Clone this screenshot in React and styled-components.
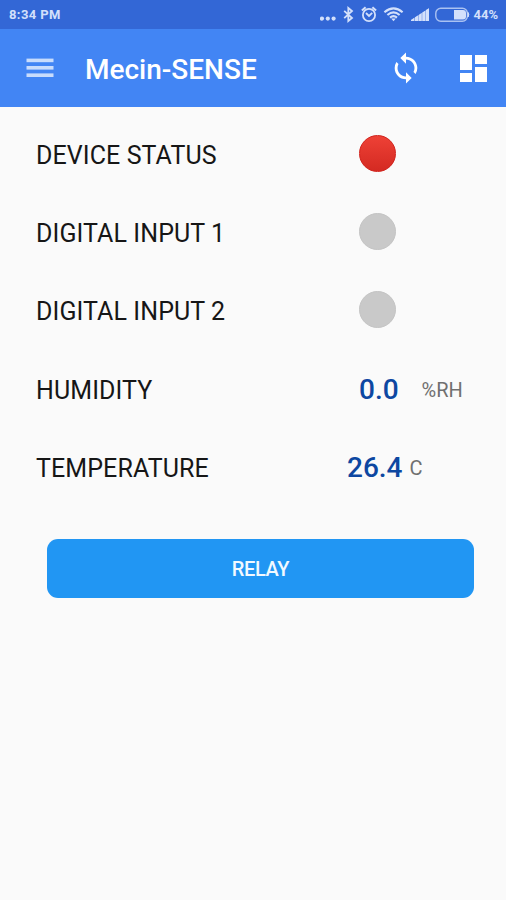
import React from "react";
import styled, { createGlobalStyle } from "styled-components";

const GlobalStyle = createGlobalStyle`
  * { box-sizing: border-box; }
  html, body { margin: 0; background: #fafafa; }
  body { font-family: Roboto, sans-serif; }
`;

const Screen = styled.div`
  display: flex;
  flex-direction: column;
  width: 506px;
  height: 900px;
  overflow: hidden;
  background: #fafafa;
`;

const StatusBar = styled.div`
  display: flex;
  align-items: center;
  justify-content: space-between;
  height: 29px;
  padding: 0 8px 0 9px;
  background: #3367d6;
  color: #d3e0fb;
`;

const StatusText = styled.span`
  font-size: 13px;
  font-weight: 700;
  line-height: 29px;
  white-space: nowrap;
  letter-spacing: ${(p) => p.$spacing || 0}px;
`;

const StatusIcons = styled.div`
  display: flex;
  align-items: center;

  svg { display: block; flex: none; }
`;

const AppBar = styled.header`
  display: flex;
  align-items: center;
  height: 78px;
  padding: 0 19px 0 26px;
  background: #4285f4;
  color: #fff;
`;

const IconButton = styled.button`
  display: flex;
  padding: 0;
  border: 0;
  background: none;
  color: inherit;
  margin-left: ${(p) => p.$gap || 0}px;
`;

const Title = styled.h1`
  flex: 1;
  margin: 4px 0 0 31px;
  font-size: 28px;
  font-weight: 500;
  line-height: 34px;
`;

const Readings = styled.main`
  display: grid;
  grid-auto-rows: 78.3px;
  padding: 9px 0 0 36px;
`;

const Row = styled.div`
  display: grid;
  grid-template-columns: ${(p) => p.$split}px 1fr;
  align-items: center;
`;

const Label = styled.span`
  font-size: 25px;
  line-height: 30px;
  padding-top: 1px;
  color: #161616;
  white-space: nowrap;
  letter-spacing: 0.09px;
`;

const Lamp = styled.span`
  width: 37px;
  height: 37px;
  margin-top: -4px;
  border-radius: 50%;
  background: ${(p) => (p.$on ? "linear-gradient(#ee4136, #d42a22)" : "#c9c9c9")};
  border: 1px solid ${(p) => (p.$on ? "#d1211b" : "#c4c4c4")};
`;

const Reading = styled.div`
  display: flex;
  align-items: center;
`;

const Value = styled.span`
  font-size: 28px;
  font-weight: 500;
  line-height: 34px;
  color: #0d47a1;
`;

const Unit = styled.span`
  margin-left: ${(p) => p.$gap}px;
  font-size: 20px;
  line-height: 30px;
  color: #707070;
`;

const RelayButton = styled.button`
  width: 427px;
  height: 58.5px;
  margin: 32px 0 0 47px;
  padding: 0;
  border: 0;
  border-radius: 11px;
  background: #2196f3;
  color: #f2f9ff;
  font-family: inherit;
  font-size: 20px;
  font-weight: 500;
  letter-spacing: -0.35px;
`;

const Dots = () => (
  <svg width="16" height="29" fill="currentColor">
    <circle cx="2" cy="18.6" r="2.1" />
    <circle cx="7.8" cy="18.6" r="2.1" />
    <circle cx="13.6" cy="18.6" r="2.1" />
  </svg>
);

const Bluetooth = () => (
  <svg width="23" height="29" fill="none" stroke="currentColor" strokeWidth="1.8">
    <path d="M8.2 10.8 L16 18 L12.3 21 V8 L16 11 L8.2 18.2" />
  </svg>
);

const Alarm = () => (
  <svg width="24" height="29" fill="none" stroke="currentColor" strokeWidth="1.8">
    <circle cx="10" cy="15" r="6.1" />
    <path d="M7 13 L10 15.9 L13.2 12.8" />
    <path d="M2.9 10.6 L6.6 7.3 M13.4 7.3 L17.1 10.6" strokeWidth="2" />
  </svg>
);

const Wifi = () => (
  <svg width="27" height="29" fill="none" stroke="currentColor" strokeWidth="2.1">
    <path d="M1.4 12.2 Q10.5 4.4 19.6 12.2" />
    <path d="M4.4 15 Q10.5 9.8 16.6 15" />
    <path d="M7 17.6 Q10.5 14.8 14 17.6" />
    <path d="M8.2 18.4 H12.8 L10.5 21.2 Z" fill="currentColor" stroke="none" />
  </svg>
);

const Signal = () => (
  <svg width="25" height="29" fill="currentColor">
    <path d="M1 21 V20 L19 8.2 V21 Z" opacity="0.55" />
    <path d="M1 21 V20 L4 18 V21 Z M5 21 V17.3 L8 15.4 V21 Z M8.8 21 V14.9 L11.6 13 V21 Z M12.4 21 V12.5 L15.2 10.7 V21 Z M16 21 V10.1 L19 8.2 V21 Z" />
  </svg>
);

const Battery = () => (
  <svg width="38" height="29">
    <rect x="0.8" y="8.2" width="31.6" height="13" rx="5" fill="none" stroke="currentColor" strokeWidth="1.4" opacity="0.75" />
    <path d="M19 10 H28 Q31 10 31 13 V16.4 Q31 19.4 28 19.4 H19 Z" fill="currentColor" />
    <path d="M33 12.4 Q34.6 14.7 33 17 Z" fill="currentColor" stroke="currentColor" />
  </svg>
);

const MenuIcon = () => (
  <svg width="28" height="20" fill="#c8dcfc">
    <rect x="0.5" y="0.6" width="27" height="3.6" />
    <rect x="0.5" y="8" width="27" height="3.6" />
    <rect x="0.5" y="15.4" width="27" height="3.6" />
  </svg>
);

const SyncIcon = () => (
  <svg width="34" height="34" viewBox="0 0 24 24" fill="currentColor">
    <path d="M12 4V1L8 5l4 4V6c3.31 0 6 2.69 6 6 0 1.01-.25 1.97-.7 2.8l1.46 1.46A7.93 7.93 0 0 0 20 12c0-4.42-3.58-8-8-8zm0 14c-3.31 0-6-2.69-6-6 0-1.01.25-1.97.7-2.8L5.24 7.74A7.93 7.93 0 0 0 4 12c0 4.42 3.58 8 8 8v3l4-4-4-4v3z" />
  </svg>
);

const DashboardIcon = () => (
  <svg width="27" height="27" viewBox="3 3 18 18" fill="currentColor">
    <path d="M3 13h8V3H3v10zm0 8h8v-6H3v6zm10 0h8V11h-8v10zm0-18v6h8V3h-8z" />
  </svg>
);

export default function App() {
  return (
    <>
      <GlobalStyle />
      <Screen>
        <StatusBar>
          <StatusText $spacing={0.4}>8:34 PM</StatusText>
          <StatusIcons>
            <Dots />
            <Bluetooth />
            <Alarm />
            <Wifi />
            <Signal />
            <Battery />
            <StatusText>44%</StatusText>
          </StatusIcons>
        </StatusBar>
        <AppBar>
          <IconButton aria-label="Menu"><MenuIcon /></IconButton>
          <Title>Mecin-SENSE</Title>
          <IconButton aria-label="Sync"><SyncIcon /></IconButton>
          <IconButton aria-label="Dashboard" $gap={37}><DashboardIcon /></IconButton>
        </AppBar>
        <Readings>
          <Row $split={323}>
            <Label>DEVICE STATUS</Label>
            <Lamp $on />
          </Row>
          <Row $split={323}>
            <Label>DIGITAL INPUT 1</Label>
            <Lamp />
          </Row>
          <Row $split={323}>
            <Label>DIGITAL INPUT 2</Label>
            <Lamp />
          </Row>
          <Row $split={323}>
            <Label>HUMIDITY</Label>
            <Reading><Value>0.0</Value><Unit $gap={23}>%RH</Unit></Reading>
          </Row>
          <Row $split={311}>
            <Label>TEMPERATURE</Label>
            <Reading><Value>26.4</Value><Unit $gap={7}>C</Unit></Reading>
          </Row>
        </Readings>
        <RelayButton>RELAY</RelayButton>
      </Screen>
    </>
  );
}
